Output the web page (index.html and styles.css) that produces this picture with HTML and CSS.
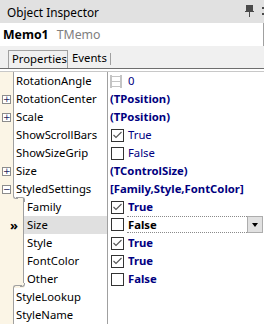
FILE: index.html
```html
<!DOCTYPE html>
<html lang="en">
<head>
    <meta charset="UTF-8">
    <title>Object Inspector</title>
    <link rel="stylesheet" href="styles.css">
</head>
<body>
    <div class="inspector">
        <div class="title">
            <span>Object Inspector</span>
            <span class="title-tools">
                <svg width="9" height="13" viewBox="0 0 9 13"><rect x="1" y="0" width="7" height="6" fill="#4a4a4a"/><rect x="0" y="6" width="9" height="1" fill="#4a4a4a"/><rect x="4" y="7" width="1" height="5" fill="#4a4a4a"/></svg>
                <svg width="4" height="13" viewBox="0 0 4 13"><rect x="0" y="2" width="4" height="2" fill="#4a4a4a"/><rect x="0" y="8" width="4" height="2" fill="#4a4a4a"/></svg>
            </span>
        </div>
        <div class="comp"><b>Memo1</b><span class="cls">TMemo</span></div>
        <div class="tabs">
            <span class="tab active">Properties</span>
            <span class="tab">Events</span>
        </div>
        <div class="tabs-gap"></div>

        <div class="grid">
            <div class="row">
                <div class="left"><div class="gut"></div><div class="name">RotationAngle</div></div>
                <div class="val">
                    <svg class="spin" width="12" height="13" viewBox="0 0 12 13"><g fill="#c4c4c4"><rect x="0" y="0" width="2" height="13"/><rect x="10" y="0" width="2" height="13"/><rect x="2" y="1" width="8" height="1"/><rect x="2" y="6" width="8" height="1"/><rect x="2" y="11" width="8" height="1"/></g></svg>
                    <span>0</span>
                </div>
            </div>
            <div class="row">
                <div class="left"><div class="gut"><span class="exp">+</span></div><div class="name">RotationCenter</div></div>
                <div class="val bold">(TPosition)</div>
            </div>
            <div class="row">
                <div class="left"><div class="gut"><span class="exp">+</span></div><div class="name">Scale</div></div>
                <div class="val bold">(TPosition)</div>
            </div>
            <div class="row">
                <div class="left"><div class="gut"></div><div class="name">ShowScrollBars</div></div>
                <div class="val"><span class="chk"><svg width="11" height="11" viewBox="0 0 11 11"><polyline points="1.5,5 4,7.5 9.5,2" fill="none" stroke="#555" stroke-width="1.1"/></svg></span>True</div>
            </div>
            <div class="row">
                <div class="left"><div class="gut"></div><div class="name">ShowSizeGrip</div></div>
                <div class="val"><span class="chk"></span>False</div>
            </div>
            <div class="row">
                <div class="left"><div class="gut"><span class="exp">+</span></div><div class="name">Size</div></div>
                <div class="val bold">(TControlSize)</div>
            </div>
            <div class="row open">
                <div class="left"><div class="gut"><span class="exp">&minus;</span></div><div class="name">StyledSettings</div></div>
                <div class="val bold">[Family,Style,FontColor]</div>
            </div>
            <div class="row sub first">
                <div class="left"><div class="gut"></div><div class="name">Family</div></div>
                <div class="val bold"><span class="chk"><svg width="11" height="11" viewBox="0 0 11 11"><polyline points="1.5,5 4,7.5 9.5,2" fill="none" stroke="#555" stroke-width="1.1"/></svg></span>True</div>
            </div>
            <div class="row sub selected">
                <div class="left"><div class="gut"><span class="marker">&raquo;</span></div><div class="name">Size</div></div>
                <div class="val bold">
                    <span class="chk"></span>
                    <span class="editor">False</span>
                    <span class="drop"></span>
                </div>
            </div>
            <div class="row sub">
                <div class="left"><div class="gut"></div><div class="name">Style</div></div>
                <div class="val bold"><span class="chk"><svg width="11" height="11" viewBox="0 0 11 11"><polyline points="1.5,5 4,7.5 9.5,2" fill="none" stroke="#555" stroke-width="1.1"/></svg></span>True</div>
            </div>
            <div class="row sub">
                <div class="left"><div class="gut"></div><div class="name">FontColor</div></div>
                <div class="val bold"><span class="chk"><svg width="11" height="11" viewBox="0 0 11 11"><polyline points="1.5,5 4,7.5 9.5,2" fill="none" stroke="#555" stroke-width="1.1"/></svg></span>True</div>
            </div>
            <div class="row sub last">
                <div class="left"><div class="gut"></div><div class="name">Other</div></div>
                <div class="val bold"><span class="chk"></span>False</div>
            </div>
            <div class="row">
                <div class="left"><div class="gut"></div><div class="name">StyleLookup</div></div>
                <div class="val"></div>
            </div>
            <div class="row">
                <div class="left"><div class="gut"></div><div class="name">StyleName</div></div>
                <div class="val"></div>
            </div>
        </div>
    </div>
</body>
</html>
```

FILE: styles.css
```css
* {
    box-sizing: border-box;
}

body {
    margin: 0;
    font-family: "Noto Sans", Lato, sans-serif;
    font-size: 11.3px;
    color: #000;
    background: #fff;
}

.inspector {
    width: 264px;
}

.title {
    height: 23px;
    background: #e1e1e1;
    display: flex;
    align-items: center;
    justify-content: space-between;
    padding-left: 7px;
    font-size: 11.8px;
}

.title-tools {
    display: flex;
    gap: 8px;
    align-items: center;
    margin-right: -2px;
}

.comp {
    height: 23px;
    display: flex;
    align-items: center;
    gap: 8px;
    padding-left: 3px;
    border-right: 1px solid #a0a0a0;
    font-size: 12.3px;
}

.comp .cls {
    color: #808080;
}

.tabs {
    height: 23px;
    background: #f0f0f0;
    border-bottom: 1px solid #6e6e6e;
    display: flex;
    align-items: flex-end;
    padding-left: 8px;
}

.tab {
    height: 18px;
    line-height: 16px;
    padding: 0 3px;
}

.tab.active {
    width: 60px;
    border: 1px solid #a0a0a0;
    border-bottom: none;
}

.tab + .tab {
    height: 12px;
    line-height: 10px;
    margin-bottom: 3px;
    padding-left: 4px;
    border-right: 1px solid #a0a0a0;
}

.tabs-gap {
    height: 3px;
    border-bottom: 1px solid #c8c8c8;
}

/* property grid */
.row {
    display: flex;
    height: 18px;
    line-height: 18px;
}

.left {
    width: 108px;
    flex: none;
    display: flex;
    border-right: 1px solid #a0a0a0;
}

.gut {
    width: 14px;
    flex: none;
    position: relative;
    display: flex;
    align-items: center;
    padding-left: 3px;
    background: linear-gradient(#a0a0a0, #a0a0a0) right top / 1px 100% no-repeat, #fbf5e6;
}

.sub .gut {
    width: 24px;
}

.open .gut {
    background-size: 1px 15px, auto;
}

.last .gut {
    background-size: 1px 13px, auto;
}

.first .gut::before,
.first .gut::after,
.last .gut::before,
.last .gut::after {
    content: "";
    position: absolute;
    border: 0 solid #a0a0a0;
}

.first .gut::before {
    left: 13px;
    top: -3px;
    width: 4px;
    height: 3px;
    border-left-width: 1px;
    border-bottom-width: 1px;
    border-bottom-left-radius: 3px;
}

.first .gut::after {
    left: 16px;
    top: -1px;
    width: 8px;
    height: 4px;
    border-top-width: 1px;
    border-right-width: 1px;
    border-top-right-radius: 3px;
}

.last .gut::before {
    left: 20px;
    top: 13px;
    width: 4px;
    height: 3px;
    border-right-width: 1px;
    border-bottom-width: 1px;
    border-bottom-right-radius: 3px;
}

.last .gut::after {
    left: 13px;
    top: 15px;
    width: 8px;
    height: 3px;
    border-top-width: 1px;
    border-left-width: 1px;
    border-top-left-radius: 3px;
}

.exp {
    width: 9px;
    height: 9px;
    border: 1px solid #8c8c8c;
    background: #fff;
    font-family: "DejaVu Sans", sans-serif;
    font-size: 9px;
    line-height: 7px;
    text-align: center;
    color: #1c1c5c;
    margin-left: -1px;
}

.marker {
    margin-left: 7px;
    font-weight: 700;
    font-size: 13px;
}

.name {
    flex: 1;
    padding-left: 2px;
    white-space: nowrap;
    overflow: hidden;
}

.sub .name {
    padding-left: 3px;
}

.selected .name {
    background: #e0e0e0;
}

.val {
    flex: 1;
    display: flex;
    align-items: center;
    padding-left: 2px;
    color: #000080;
    white-space: nowrap;
    overflow: hidden;
}

.val.bold {
    font-weight: 700;
}

.spin {
    margin-right: 6px;
}

.chk {
    width: 13px;
    height: 13px;
    flex: none;
    display: flex;
    margin-left: 1px;
    margin-right: 4px;
    border: 1px solid #333;
    background: #fff;
}

.selected .val {
    align-items: flex-start;
}

.selected .chk {
    margin-top: 2px;
}

.editor {
    flex: 1;
    height: 17px;
    line-height: 15px;
    margin-left: -1px;
    padding-left: 1px;
    border-top: 1px dotted #8a8a8a;
    border-bottom: 1px dotted #8a8a8a;
    color: #000;
}

.drop {
    width: 16px;
    height: 17px;
    flex: none;
    margin-right: 1px;
    background: #e1e1e1;
    border: 1px solid #adadad;
    position: relative;
}

.drop::after {
    content: "";
    position: absolute;
    left: 4px;
    top: 6px;
    border-left: 3px solid transparent;
    border-right: 3px solid transparent;
    border-top: 4px solid #000;
}
```
